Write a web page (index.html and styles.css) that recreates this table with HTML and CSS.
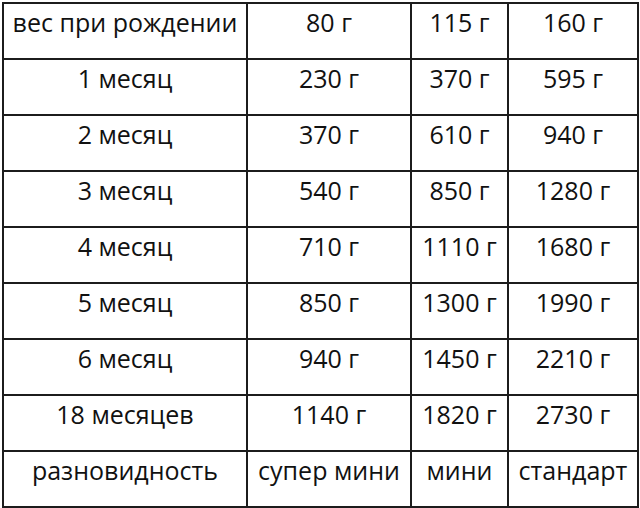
FILE: index.html
```html
<!DOCTYPE html>
<html lang="ru">
<head>
<meta charset="utf-8">
<link rel="stylesheet" href="styles.css">
</head>
<body>
<table class="weights">
  <tbody>
    <tr><td>вес при рождении</td><td>80 г</td><td>115 г</td><td>160 г</td></tr>
    <tr><td>1 месяц</td><td>230 г</td><td>370 г</td><td>595 г</td></tr>
    <tr><td>2 месяц</td><td>370 г</td><td>610 г</td><td>940 г</td></tr>
    <tr><td>3 месяц</td><td>540 г</td><td>850 г</td><td>1280 г</td></tr>
    <tr><td>4 месяц</td><td>710 г</td><td>1110 г</td><td>1680 г</td></tr>
    <tr><td>5 месяц</td><td>850 г</td><td>1300 г</td><td>1990 г</td></tr>
    <tr><td>6 месяц</td><td>940 г</td><td>1450 г</td><td>2210 г</td></tr>
    <tr><td>18 месяцев</td><td>1140 г</td><td>1820 г</td><td>2730 г</td></tr>
    <tr><td>разновидность</td><td>супер мини</td><td>мини</td><td>стандарт</td></tr>
  </tbody>
</table>
</body>
</html>
```
FILE: styles.css
```css
html, body {
  margin: 0;
  padding: 0;
  background: #fff;
}
body {
  padding: 2px 0 0 2px;
  font-family: "Open Sans", "Noto Sans", sans-serif;
  color: #111;
}
.weights {
  border-collapse: collapse;
  table-layout: fixed;
  width: 635px;
}
.weights td {
  border: 2px solid #1c1c1c;
  height: 56px;
  box-sizing: border-box;
  padding: 2px 0 0 0;
  vertical-align: top;
  text-align: center;
  font-size: 25px;
  line-height: 32px;
  white-space: nowrap;
}
.weights td:nth-child(1) { width: 244px; }
.weights td:nth-child(2) { width: 164px; }
.weights td:nth-child(3) { width: 97px; }
.weights td:nth-child(4) { width: 130px; }
```
